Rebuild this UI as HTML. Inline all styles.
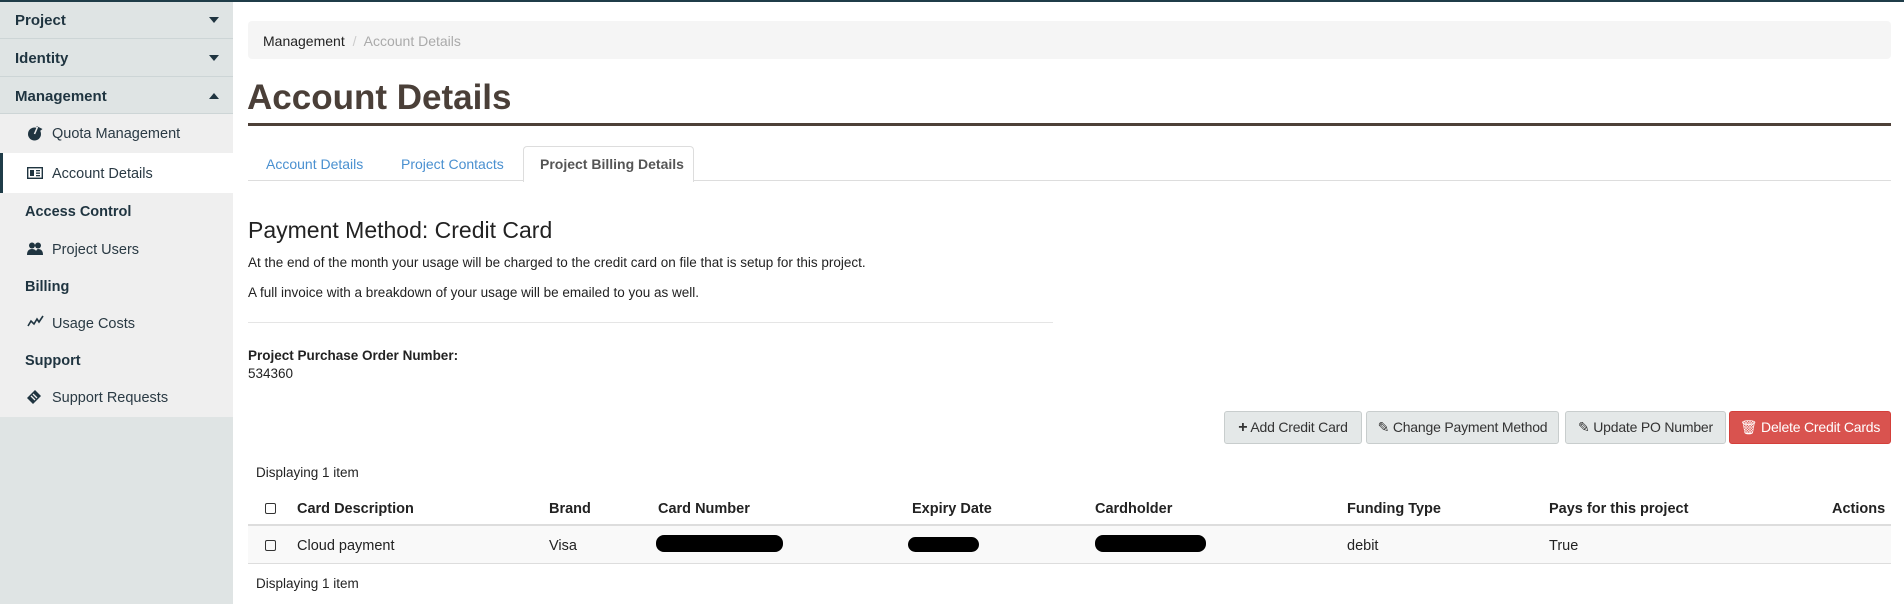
<!DOCTYPE html>
<html><head><meta charset="utf-8"><style>
*{margin:0;padding:0;box-sizing:border-box}
body{width:1904px;height:604px;overflow:hidden;background:#fff;font-family:"Liberation Sans",sans-serif;color:#222;font-size:14px;position:relative}
.a{position:absolute;white-space:nowrap}
.sb{position:absolute;left:0;top:0;width:233px;height:604px;background:#dfe4e4}
.hd{position:absolute;left:0;width:233px;background:#dfe4e4;border-bottom:1px solid #cdd5d6;font-weight:bold;font-size:15px;color:#1f3440;padding-left:15px}
.sub{position:absolute;left:0;width:233px;background:#efefef}
.car{position:absolute;right:14px;width:0;height:0;border-left:5px solid transparent;border-right:5px solid transparent}
.it{position:absolute;left:52px;font-size:14.5px;color:#2a3a44;white-space:nowrap}
.sh{position:absolute;left:25px;font-weight:bold;font-size:14.5px;color:#1f3440}
.btn{position:absolute;top:411px;height:33px;border:1px solid #c8cdcd;border-radius:3px;background:#e4e8e8;font-size:14px;color:#333;line-height:31px;text-align:center;white-space:nowrap;letter-spacing:-0.2px}
.th{position:absolute;top:501px;font-weight:bold;font-size:14.5px;color:#222;white-space:nowrap}
.td{position:absolute;top:538px;font-size:14.5px;color:#222;white-space:nowrap}
.cb{position:absolute;left:265px;width:11px;height:11px;border:1.5px solid #333;border-radius:2px}
.blk{position:absolute;background:#000;border-radius:8px}
</style></head><body>
<div style="position:absolute;left:0;top:0;width:1904px;height:2px;background:#1f3c48;z-index:5"></div>
<div class="sb"></div>
<div class="hd" style="top:0;height:39px;line-height:41px">Project<span class="car" style="top:17px;border-top:6px solid #1f3440"></span></div>
<div class="hd" style="top:39px;height:38px;line-height:40px">Identity<span class="car" style="top:16px;border-top:6px solid #1f3440"></span></div>
<div class="hd" style="top:77px;height:37px;line-height:39px">Management<span class="car" style="top:16px;border-bottom:6px solid #1f3440"></span></div>
<div class="sub" style="top:114px;height:303px"></div>
<div class="a" style="left:0;top:153px;width:233px;height:40px;background:#fff;border-left:3px solid #1f3c48"></div>
<svg class="a" style="left:27px;top:125px" width="17" height="16" viewBox="0 0 16 16"><circle cx="7" cy="9" r="6.5" fill="#1f3440"/><path d="M9 1 L15 4 L10 8 Z" fill="#1f3440"/><path d="M7 9 L10 2" stroke="#efefef" stroke-width="1.5"/></svg>
<div class="it" style="top:126px">Quota Management</div>
<svg class="a" style="left:27px;top:167px" width="16" height="12" viewBox="0 0 16 12"><rect x="0.7" y="0.7" width="14.6" height="10.6" fill="none" stroke="#1f3440" stroke-width="1.4"/><rect x="3" y="3" width="4" height="6" fill="#1f3440"/><rect x="9" y="3" width="4" height="1.3" fill="#1f3440"/><rect x="9" y="5.5" width="4" height="1.3" fill="#1f3440"/><rect x="9" y="8" width="4" height="1.3" fill="#1f3440"/></svg>
<div class="it" style="top:166px">Account Details</div>
<div class="sh" style="top:204px">Access Control</div>
<svg class="a" style="left:27px;top:242px" width="16" height="13" viewBox="0 0 16 13"><circle cx="5" cy="3.5" r="3" fill="#1f3440"/><circle cx="11" cy="3.5" r="3" fill="#1f3440"/><path d="M0 13 Q0 7 5 7 Q10 7 10 13Z M8 13 Q9 7 11 7 Q16 7 16 13Z" fill="#1f3440"/></svg>
<div class="it" style="top:242px">Project Users</div>
<div class="sh" style="top:279px">Billing</div>
<svg class="a" style="left:27px;top:315px" width="17" height="12" viewBox="0 0 17 12"><path d="M1 11 L4 6 L7 9 L10 4 L12 7 L16 1" stroke="#1f3440" stroke-width="1.6" fill="none"/></svg>
<div class="it" style="top:316px">Usage Costs</div>
<div class="sh" style="top:353px">Support</div>
<svg class="a" style="left:26px;top:389px" width="16" height="16" viewBox="0 0 16 16"><path d="M1 9 L9 1 L15 7 L7 15 Z" fill="#1f3440"/><path d="M5 7 L9 11 M7 5 L11 9" stroke="#efefef" stroke-width="1.3"/></svg>
<div class="it" style="top:390px">Support Requests</div>

<div class="a" style="left:248px;top:21px;width:1643px;height:38px;background:#f5f5f5;border-radius:4px"></div>
<div class="a" style="left:263px;top:33px;font-size:14px;color:#222">Management <span style="color:#ccc;padding:0 4px">/</span> <span style="color:#aaa">Account Details</span></div>
<div class="a" style="left:247px;top:78px;font-size:35px;font-weight:bold;color:#4a3f38">Account Details</div>
<div class="a" style="left:248px;top:123px;width:1643px;height:3px;background:#4d4038"></div>

<div class="a" style="left:248px;top:180px;width:1643px;height:1px;background:#ddd"></div>
<div class="a" style="left:523px;top:146px;width:171px;height:36px;background:#fff;border:1px solid #ddd;border-bottom:none;border-radius:4px 4px 0 0"></div>
<div class="a" style="left:266px;top:156px;font-size:14px;color:#4a90d0">Account Details</div>
<div class="a" style="left:401px;top:156px;font-size:14px;color:#4a90d0">Project Contacts</div>
<div class="a" style="left:540px;top:156px;font-size:14px;color:#555;font-weight:bold">Project Billing Details</div>

<div class="a" style="left:248px;top:217px;font-size:23px;color:#222">Payment Method: Credit Card</div>
<div class="a" style="left:248px;top:255px;font-size:13.5px">At the end of the month your usage will be charged to the credit card on file that is setup for this project.</div>
<div class="a" style="left:248px;top:285px;font-size:13.5px">A full invoice with a breakdown of your usage will be emailed to you as well.</div>
<div class="a" style="left:248px;top:322px;width:805px;height:1px;background:#e5e5e5"></div>
<div class="a" style="left:248px;top:348px;font-size:13.5px;font-weight:bold">Project Purchase Order Number:</div>
<div class="a" style="left:248px;top:366px;font-size:13.5px">534360</div>

<div class="btn" style="left:1224px;width:138px"><b style="font-size:16px">+</b> Add Credit Card</div>
<div class="btn" style="left:1366px;width:193px">✎ Change Payment Method</div>
<div class="btn" style="left:1565px;width:161px">✎ Update PO Number</div>
<div class="btn" style="left:1729px;width:162px;background:#d9534f;border-color:#d43f3a;color:#fff">🗑 Delete Credit Cards</div>

<div class="a" style="left:256px;top:465px;font-size:13.5px">Displaying 1 item</div>
<div class="cb" style="top:503px"></div>
<div class="th" style="left:297px">Card Description</div>
<div class="th" style="left:549px">Brand</div>
<div class="th" style="left:658px">Card Number</div>
<div class="th" style="left:912px">Expiry Date</div>
<div class="th" style="left:1095px">Cardholder</div>
<div class="th" style="left:1347px">Funding Type</div>
<div class="th" style="left:1549px">Pays for this project</div>
<div class="th" style="left:1832px">Actions</div>
<div class="a" style="left:248px;top:524px;width:1643px;height:40px;background:#f9f9f9;border-top:2px solid #ddd;border-bottom:1px solid #ddd"></div>
<div class="cb" style="top:540px"></div>
<div class="td" style="left:297px">Cloud payment</div>
<div class="td" style="left:549px">Visa</div>
<div class="blk" style="left:656px;top:535px;width:127px;height:17px"></div>
<div class="blk" style="left:908px;top:537px;width:71px;height:15px"></div>
<div class="blk" style="left:1095px;top:535px;width:111px;height:17px"></div>
<div class="td" style="left:1347px">debit</div>
<div class="td" style="left:1549px">True</div>
<div class="a" style="left:256px;top:576px;font-size:13.5px">Displaying 1 item</div>
</body></html>
